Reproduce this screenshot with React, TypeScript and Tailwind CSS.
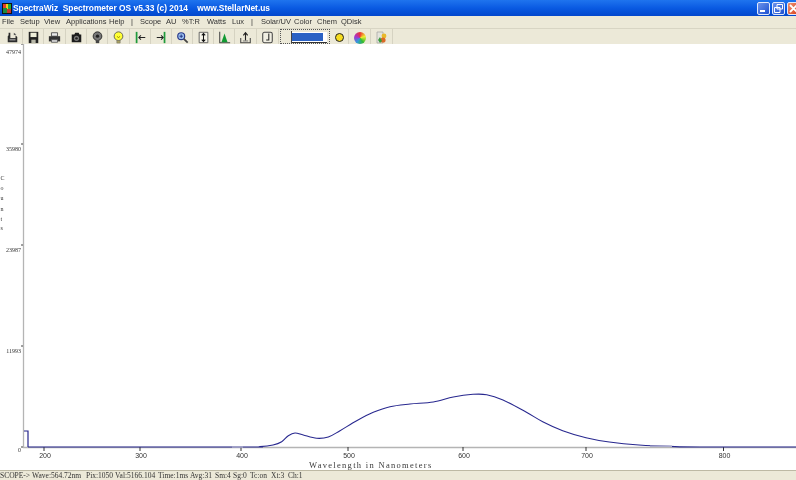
import React from "react";

const curve: [number, number][] = [
  [28,447],[240,447],[260,446.6],[273,445],[281.7,441.7],[288.3,435.7],[295,433],[303.3,435],[316.7,438.3],[328.3,437],
  [340,430.7],[356.7,420.7],[373.3,412.3],[390,406.7],[410,404],[433.3,402],[453.3,397],[473,394.3],[486.7,394.7],
  [503,400],[526,412],[542.7,421.7],[562.7,430.7],[586,437.7],[609.3,442],[639,445],[669,446.4],[700,447],[796,447],
];

function smooth(pts: [number, number][]) {
  let d = `M${pts[0][0]} ${pts[0][1]}`;
  for (let i = 0; i < pts.length - 1; i++) {
    const p0 = pts[Math.max(0, i - 1)], p1 = pts[i], p2 = pts[i + 1], p3 = pts[Math.min(pts.length - 1, i + 2)];
    const c1x = p1[0] + (p2[0] - p0[0]) / 6, c1y = p1[1] + (p2[1] - p0[1]) / 6;
    const c2x = p2[0] - (p3[0] - p1[0]) / 6, c2y = p2[1] - (p3[1] - p1[1]) / 6;
    d += ` C${c1x.toFixed(1)} ${c1y.toFixed(1)} ${c2x.toFixed(1)} ${c2y.toFixed(1)} ${p2[0]} ${p2[1]}`;
  }
  return d;
}

const Ico = ({ children }: { children: React.ReactNode }) => (
  <svg width="13" height="13" viewBox="0 0 15 15">{children}</svg>
);

const icons: React.ReactNode[] = [
  <Ico><path d="M3 2h2v6h6V5l2 2v6H2V6l1-1z" fill="#2c2c2c" /><path d="M4 9h7v2H4z" fill="#8a8a8a" /><path d="M9 2l3 2-3 1z" fill="#555" /></Ico>,
  <Ico><path d="M2 1h11v13H2z" fill="#222" /><path d="M4 2h7v5H4z" fill="#eeeeda" /><path d="M5 10h5v4H5z" fill="#b8b8a8" /></Ico>,
  <Ico><path d="M4 2h7v4H4z" fill="#e8e8e8" stroke="#444" /><path d="M1 6h13v6H1z" fill="#333" /><path d="M4 10h7v3H4z" fill="#ddd" stroke="#555" /></Ico>,
  <Ico><path d="M2 4h3l1-2h4l1 2h2v9H2z" fill="#1c1c1c" /><circle cx="7.5" cy="8.5" r="3" fill="#777" /><circle cx="7.5" cy="8.5" r="1.4" fill="#222" /></Ico>,
  <Ico><circle cx="7.5" cy="6" r="5" fill="#777" stroke="#222" /><circle cx="7.5" cy="6" r="1.9" fill="#222" /><path d="M5.5 11h4v3h-4z" fill="#444" /></Ico>,
  <Ico><circle cx="7.5" cy="6" r="5" fill="#ffff33" stroke="#555" /><path d="M6 6l1.5 2L9 6" fill="none" stroke="#998800" /><path d="M5.5 11h4v3h-4z" fill="#a8a060" stroke="#666" strokeWidth="0.5" /></Ico>,
  <Ico><path d="M3 1v13" stroke="#1f9a3c" strokeWidth="2" /><path d="M13 7.5H6M8 5L5.5 7.5 8 10" fill="none" stroke="#222" strokeWidth="1.2" /></Ico>,
  <Ico><path d="M11 1v13" stroke="#1f9a3c" strokeWidth="2" /><path d="M2 7.5h7M7 5l2.5 2.5L7 10" fill="none" stroke="#222" strokeWidth="1.2" /></Ico>,
  <Ico><circle cx="6" cy="6" r="4" fill="#9bc0f0" stroke="#2a3a8a" strokeWidth="1.4" /><path d="M4 6h4M6 4v4" stroke="#1a2a7a" /><path d="M9 9l4.5 4.5" stroke="#444" strokeWidth="2" /></Ico>,
  <Ico><path d="M2.5 1.5h10v12h-10z" fill="#f6f4ea" stroke="#555" /><path d="M7.5 3v9M5.5 5l2-2 2 2M5.5 10l2 2 2-2" fill="none" stroke="#111" strokeWidth="1.2" /></Ico>,
  <Ico><path d="M2 1v12.5h12" fill="none" stroke="#444" strokeWidth="1.2" /><path d="M4 13l3.5-10L11 13z" fill="#119a33" /></Ico>,
  <Ico><path d="M2 8v5.5h11V8" fill="none" stroke="#444" strokeWidth="1.2" /><path d="M7.5 11V2M5 5l2.5-3L10 5" fill="none" stroke="#222" strokeWidth="1.3" /><path d="M4.5 11.5h6" stroke="#666" /></Ico>,
  <Ico><rect x="2" y="1.5" width="11" height="12" rx="2" fill="#f0eee2" stroke="#444" strokeWidth="1.2" /><path d="M9 3v7.5H6" fill="none" stroke="#222" strokeWidth="1.2" /></Ico>,
];

const btnW = [
  "w-[20px]","w-[21px]","w-[22px]","w-[21px]","w-[21px]","w-[22px]","w-[21px]","w-[21px]","w-[21px]","w-[21px]","w-[21px]","w-[22px]","w-[22px]",
];

const menu: [string, string][] = [
  ["File","w-[18px]"],["Setup","w-[24px]"],["View","w-[22px]"],["Applications","w-[43px]"],["Help","w-[22px]"],["|","w-[9px]"],
  ["Scope","w-[26px]"],["AU","w-[16px]"],["%T:R","w-[25px]"],["Watts","w-[25px]"],["Lux","w-[19px]"],["|","w-[10px]"],
  ["Solar/UV","w-[33px]"],["Color","w-[23px]"],["Chem","w-[24px]"],["QDisk","w-[30px]"],
];

const status: [string, string][] = [
  ["SCOPE->","w-[32px]"],["Wave:564.72nm","w-[54px]"],["Pix:1050","w-[29px]"],["Val:5166.104","w-[43px]"],["Time:1ms","w-[32px]"],
  ["Avg:31","w-[25px]"],["Sm:4","w-[18px]"],["Sg:0","w-[17px]"],["Tc:on","w-[21px]"],["Xt:3","w-[17px]"],["Ch:1","w-[20px]"],
];

const yTicks: [number, number, string][] = [[44,52,"47974"],[144,149,"35980"],[245,250,"23987"],[346,351,"11993"],[447,450,"0"]];
const xTicks: [number, string][] = [[44,"200"],[140,"300"],[241,"400"],[348,"500"],[463,"600"],[586,"700"],[723.5,"800"]];
const counts: [string, number][] = [["C",178],["o",188],["u",198],["n",209],["t",219],["s",228]];

function WinBtn({ red, children }: { red?: boolean; children: React.ReactNode }) {
  return (
    <div className={`flex h-[13px] w-[13px] shrink-0 items-center justify-center rounded-[2px] border border-[#dfe8fb] ${red ? "bg-gradient-to-br from-[#ee9070] to-[#d63c12]" : "bg-gradient-to-br from-[#6d92ea] to-[#1c4fd0]"}`}>
      {children}
    </div>
  );
}

export default function App() {
  return (
    <div className="flex h-[480px] w-[796px] flex-col overflow-hidden bg-white font-['Liberation_Sans',sans-serif]">
      <div className="flex h-[16px] shrink-0 items-center bg-gradient-to-b from-[#1f74ee] via-[#0a5ae2] to-[#0347cc] pl-[2px]">
        <svg width="10" height="11" viewBox="0 0 10 11" className="shrink-0">
          <rect width="10" height="11" fill="#111" />
          <rect x="1" y="1" width="3" height="4" fill="#e23b2b" />
          <rect x="4" y="1" width="2" height="5" fill="#f2d21b" />
          <rect x="6" y="1" width="3" height="5" fill="#1faa3a" />
          <rect x="1" y="5" width="4" height="5" fill="#1c8a3e" />
          <rect x="5" y="6" width="4" height="4" fill="#c7362a" />
        </svg>
        <span className="ml-[1px] whitespace-pre text-[8.4px] font-bold text-white blur-[0.2px] font-['Liberation_Sans',sans-serif]">
          {"SpectraWiz  Spectrometer OS v5.33 (c) 2014    www.StellarNet.us"}
        </span>
        <div className="-mr-[4px] ml-auto flex gap-[2px]">
          <WinBtn><div className="mt-[6px] mr-[2px] h-[2px] w-[5px] bg-white" /></WinBtn>
          <WinBtn>
            <svg width="9" height="9" viewBox="0 0 9 9"><path d="M3 .5h5.5V5H3zM.5 3.5H6v5H.5z" fill="none" stroke="#fff" /></svg>
          </WinBtn>
          <WinBtn red>
            <svg width="9" height="9" viewBox="0 0 9 9"><path d="M1 1l7 7M8 1L1 8" stroke="#fff" strokeWidth="1.8" /></svg>
          </WinBtn>
        </div>
      </div>

      <div className="flex h-[13px] shrink-0 items-center border-b border-[#d8d5c4] bg-[#ece9d8] pl-[2px] text-[7.5px] text-[#333] blur-[0.25px]">
        {menu.map(([t, w], i) => (
          <span key={i} className={`${w} shrink-0 whitespace-pre`}>{t}</span>
        ))}
      </div>

      <div className="flex h-[15px] shrink-0 items-center bg-[#ece9d8] pl-[3px]">
        {icons.map((ic, i) => (
          <div key={i} className={`${btnW[i]} flex h-full shrink-0 items-center justify-center border-r border-[#d6d3c2] pt-[2px] blur-[0.35px]`}>
            {ic}
          </div>
        ))}
        <div className="ml-[1px] flex h-full w-[50px] shrink-0 items-center border border-dotted border-[#555] bg-[#ece9d8] pt-[1px]">
          <div className="h-full w-[11px] shrink-0 border-r border-[#444]" />
          <div className="flex h-[11px] w-[35px] items-center border-b border-[#333] bg-white">
            <div className="h-[8px] w-[31px] bg-[#2b62c4]" />
          </div>
        </div>
        <div className="flex h-full w-[19px] shrink-0 items-center justify-center border-r border-[#d6d3c2] pt-[2px]">
          <div className="h-[9px] w-[9px] rounded-full border border-[#222] bg-[#f6dc1e]" />
        </div>
        <div className="flex h-full w-[22px] shrink-0 items-center justify-center border-r border-[#d6d3c2] pt-[2px]">
          <div className="h-[12px] w-[12px] rounded-full bg-[conic-gradient(#e33,#ee3,#3b3,#39d,#a3c,#e33)]" />
        </div>
        <div className="flex h-full w-[22px] shrink-0 items-center justify-center border-r border-[#d6d3c2] pt-[2px]">
          <svg width="13" height="13" viewBox="0 0 13 13">
            <path d="M2 1h6v11H2z" fill="#e4e4dc" stroke="#999" strokeWidth="0.6" />
            <circle cx="9" cy="5" r="2.4" fill="#e9b92b" />
            <circle cx="8" cy="9" r="2.6" fill="#dc6a26" />
            <path d="M3 9l2-3 2 4-2 2z" fill="#3a9a3f" />
          </svg>
        </div>
      </div>

      <div className="min-h-0 flex-1">
        <svg width="796" height="426" viewBox="0 44 796 426" className="block">
          <path d="M23.5 44V447.5H796" fill="none" stroke="#b4b4b4" strokeWidth="1.3" />
          <g fill="#333" fontFamily="'Liberation Serif', serif" fontSize="6px" className="blur-[0.2px]">
            {yTicks.map(([ty, ly, t]) => (
              <g key={t}>
                <path d={`M21 ${ty}h2`} stroke="#444" strokeWidth="1" />
                <text x="21" y={ly + 2} textAnchor="end">{t}</text>
              </g>
            ))}
            {counts.map(([c, y]) => (
              <text key={y} x="0.5" y={y + 2}>{c}</text>
            ))}
          </g>
          <g fill="#333" fontFamily="'Liberation Sans', sans-serif" fontSize="7px" className="blur-[0.2px]">
            {xTicks.map(([x, t]) => (
              <g key={t}>
                <path d={`M${x} 447v4`} stroke="#333" strokeWidth="1" />
                <text x={x + 1} y="458" textAnchor="middle">{t}</text>
              </g>
            ))}
          </g>
          <text x="309" y="468" fill="#3a3a3a" fontFamily="'Liberation Serif', serif" fontSize="8.5px" letterSpacing="1.3px" className="blur-[0.2px]">
            Wavelength in Nanometers
          </text>
          <path d="M24 431h4v16" fill="none" stroke="#24248c" strokeWidth="1.2" />
          <path d={smooth(curve)} fill="none" stroke="#28288f" strokeWidth="1.1" />
          <path d="M232 447h11M650 446.2h22" stroke="#a9a9cc" strokeWidth="1.6" />
        </svg>
      </div>

      <div className="flex h-[10px] shrink-0 items-center border-t border-[#bdb9a4] bg-[#ece9d8] font-['Liberation_Serif',serif] text-[7.5px] text-[#333] blur-[0.2px]">
        {status.map(([t, w]) => (
          <span key={t} className={`${w} shrink-0 whitespace-pre`}>{t}</span>
        ))}
      </div>
    </div>
  );
}
